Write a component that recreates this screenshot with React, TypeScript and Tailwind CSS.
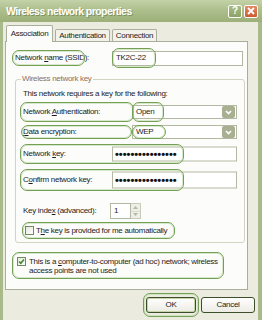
import React from "react";
import clsx from "clsx";

const ann = "absolute pointer-events-none rounded-[7px] border-[1.5px] border-[#74a055] shadow-[inset_0_0_0_1px_rgba(190,220,170,0.6)]";

function Dots() {
  return <span className="text-[11px] font-bold tracking-[0px] leading-none text-[#111]">••••••••••••••••</span>;
}

function ComboArrow() {
  return (
    <div className="w-[13px] h-[12px] mr-[1px] rounded-[2px] bg-[#a9b091] flex items-center justify-center">
      <svg width="7" height="5" viewBox="0 0 7 5">
        <polyline points="1,1 3.5,3.5 6,1" fill="none" stroke="#fff" strokeWidth="1.6" />
      </svg>
    </div>
  );
}

function Combo({ value }: { value: string }) {
  return (
    <div className="absolute left-[116px] top-1/2 -translate-y-1/2 w-[105px] h-[14px] bg-white border border-[#b3b8a2] flex items-center">
      <span className="pl-[3px] flex-1">{value}</span>
      <ComboArrow />
    </div>
  );
}

function Check({ on }: { on?: boolean }) {
  return (
    <div className="w-[9px] h-[9px] border border-[#6f8b5e] bg-gradient-to-br from-[#e6e8dc] to-white flex items-center justify-center shrink-0">
      {on && (
        <svg width="7" height="7" viewBox="0 0 7 7">
          <polyline points="1,3.5 2.8,5.3 6,1.5" fill="none" stroke="#3f8a2a" strokeWidth="1.6" />
        </svg>
      )}
    </div>
  );
}

export default function App() {
  return (
    <div className="w-[262px] h-[320px] overflow-hidden bg-[#a9ba8a] flex flex-col font-['Liberation_Sans',Arial,sans-serif] text-[8px] tracking-[-0.3px] text-[#1d1d1d] leading-none">
      {/* title bar */}
      <div className="h-[22px] shrink-0 flex items-center pl-[6px] pr-[4px] bg-gradient-to-b from-[#c4d2a8] via-[#abbd89] to-[#9db07a]">
        <span className="flex-1 text-white font-bold text-[10.5px] tracking-[-0.55px] [text-shadow:1px_1px_0_rgba(80,95,50,0.45)]">
          Wireless network properties
        </span>
        <div className="w-[14px] h-[13px] mr-[2px] rounded-[2px] border border-white bg-gradient-to-b from-[#a8bb80] to-[#8ea266] flex items-center justify-center text-white font-bold text-[10px]">
          ?
        </div>
        <div className="w-[14px] h-[13px] rounded-[2px] border border-white bg-gradient-to-b from-[#e58a63] to-[#cc5a33] flex items-center justify-center">
          <svg width="8" height="8" viewBox="0 0 8 8">
            <path d="M1 1 L7 7 M7 1 L1 7" stroke="#fff" strokeWidth="1.8" />
          </svg>
        </div>
      </div>

      {/* body */}
      <div className="flex-1 ml-[3px] mr-[4px] bg-[#ecebdf] flex flex-col pl-[2px] pr-[10px]">
        {/* tabs */}
        <div className="h-[19px] flex items-end relative z-10">
          <div className="ml-[1px] w-[47px] h-[17px] -mb-px bg-[#fcfcfa] border border-b-0 border-[#a9ae9d] rounded-t-[2px] flex items-center justify-center">
            Association
          </div>
          <div className="ml-[2px] w-[55px] h-[12px] bg-[#f3f2ea] border border-b-0 border-[#a9ae9d] rounded-t-[2px] flex items-center justify-center">
            Authentication
          </div>
          <div className="ml-[2px] w-[45px] h-[12px] bg-[#f3f2ea] border border-b-0 border-[#a9ae9d] rounded-t-[2px] flex items-center justify-center">
            Connection
          </div>
        </div>

        {/* panel */}
        <div className="h-[249px] bg-[#fcfcfa] border border-[#a9ae9d] flex flex-col">
          {/* network name */}
          <div className="relative h-[16px] mt-[8px] flex items-center">
            <span className="ml-[9px]">Network <u>n</u>ame (SSID):</span>
            <div className="ml-auto mr-[4px] w-[131px] h-[15px] bg-white border border-[#b3b8a2] flex items-center pl-[3px]">
              TK2C-22
            </div>
            <div className={clsx(ann, "left-[6px] top-0 w-[73px] h-[16px]")} />
            <div className={clsx(ann, "left-[106px] -top-[2px] w-[44px] h-[20px]")} />
          </div>

          {/* group box */}
          <fieldset className="mt-[8px] ml-[9px] mr-[2px] h-[169px] border border-[#d3d3c3] rounded-[3px]">
            <legend className="ml-[5px] px-[1px] text-[#8f6d58] leading-[10px]">Wireless network key</legend>

            <div className="mt-[5px] ml-[7px] h-[10px] flex items-center">
              This network requires a key for the following:
            </div>

            <div className="relative h-[20px] mt-[3px] flex items-center">
              <span className="ml-[7px]">Network <u>A</u>uthentication:</span>
              <Combo value="Open" />
              <div className={clsx(ann, "left-[4px] top-0 w-[114px] h-[20px]")} />
              <div className={clsx(ann, "left-[116px] top-0 w-[32px] h-[20px]")} />
            </div>

            <div className="relative h-[14px] mt-[3px] flex items-center">
              <span className="ml-[7px]"><u>D</u>ata encryption:</span>
              <Combo value="WEP" />
              <div className={clsx(ann, "left-[5px] top-0 w-[111px] h-[14px]")} />
              <div className={clsx(ann, "left-[116px] top-0 w-[34px] h-[14px]")} />
            </div>

            <div className="relative h-[20px] mt-[5px] flex items-center">
              <span className="ml-[7px]">Network <u>k</u>ey:</span>
              <div className="absolute left-[96px] top-1/2 -translate-y-1/2 w-[125px] h-[15px] bg-white border border-[#b3b8a2] flex items-center pl-[2px]">
                <Dots />
              </div>
              <div className={clsx(ann, "left-[4px] top-0 w-[164px] h-[20px]")} />
            </div>

            <div className="relative h-[22px] mt-[5px] flex items-center">
              <span className="ml-[7px]">C<u>o</u>nfirm network key:</span>
              <div className="absolute left-[96px] top-1/2 -translate-y-1/2 w-[125px] h-[17px] bg-white border border-[#b3b8a2] flex items-center pl-[2px]">
                <Dots />
              </div>
              <div className={clsx(ann, "left-[4px] top-0 w-[164px] h-[22px]")} />
            </div>

            <div className="relative h-[16px] mt-[12px] flex items-center">
              <span className="ml-[7px]">Key inde<u>x</u> (advanced):</span>
              <div className="absolute left-[94px] top-0 h-[16px] flex">
                <div className="w-[21px] h-[16px] bg-white border border-[#b3b8a2] flex items-center pl-[3px]">1</div>
                <div className="w-[10px] h-[16px] flex flex-col border border-l-0 border-[#c9ccbb]">
                  <div className="flex-1 bg-[#eeeee6] flex items-center justify-center">
                    <svg width="5" height="3" viewBox="0 0 5 3"><polygon points="0,3 2.5,0 5,3" fill="#b6b8ab" /></svg>
                  </div>
                  <div className="flex-1 bg-[#eeeee6] flex items-center justify-center border-t border-[#dcdccf]">
                    <svg width="5" height="3" viewBox="0 0 5 3"><polygon points="0,0 2.5,3 5,0" fill="#b6b8ab" /></svg>
                  </div>
                </div>
              </div>
            </div>

            <div className="relative h-[17px] mt-[3px] flex items-center">
              <div className="ml-[9px]"><Check /></div>
              <span className="ml-[2px]">T<u>h</u>e key is provided for me automatically</span>
              <div className={clsx(ann, "left-[6px] top-0 w-[153px] h-[17px]")} />
            </div>
          </fieldset>

          {/* ad hoc */}
          <div className="relative h-[27px] mt-[9px] flex items-start">
            <div className="ml-[11px] mt-[5px]"><Check on /></div>
            <span className="ml-[3px] mt-[5px] leading-[9px]">
              This is a <u>c</u>omputer-to-computer (ad hoc) network; wireless
              <br />
              access points are not used
            </span>
            <div className={clsx(ann, "left-[6px] top-0 w-[212px] h-[27px]")} />
          </div>
        </div>

        {/* buttons */}
        <div className="relative flex justify-end items-start pt-[7px] -mr-[7px]">
          <div className="w-[50px] h-[16px] rounded-[3px] border border-[#3d4f2a] bg-gradient-to-b from-white to-[#ecebe3] flex items-center justify-center shadow-[inset_0_0_0_1px_#c6d4a9]">
            OK
          </div>
          <div className="ml-[5px] w-[54px] h-[16px] rounded-[3px] border border-[#3d4f2a] bg-gradient-to-b from-white to-[#ecebe3] flex items-center justify-center">
            Cancel
          </div>
          <div className={clsx(ann, "right-[56px] top-[3px] w-[56px] h-[24px]")} />
        </div>
      </div>
    </div>
  );
}
